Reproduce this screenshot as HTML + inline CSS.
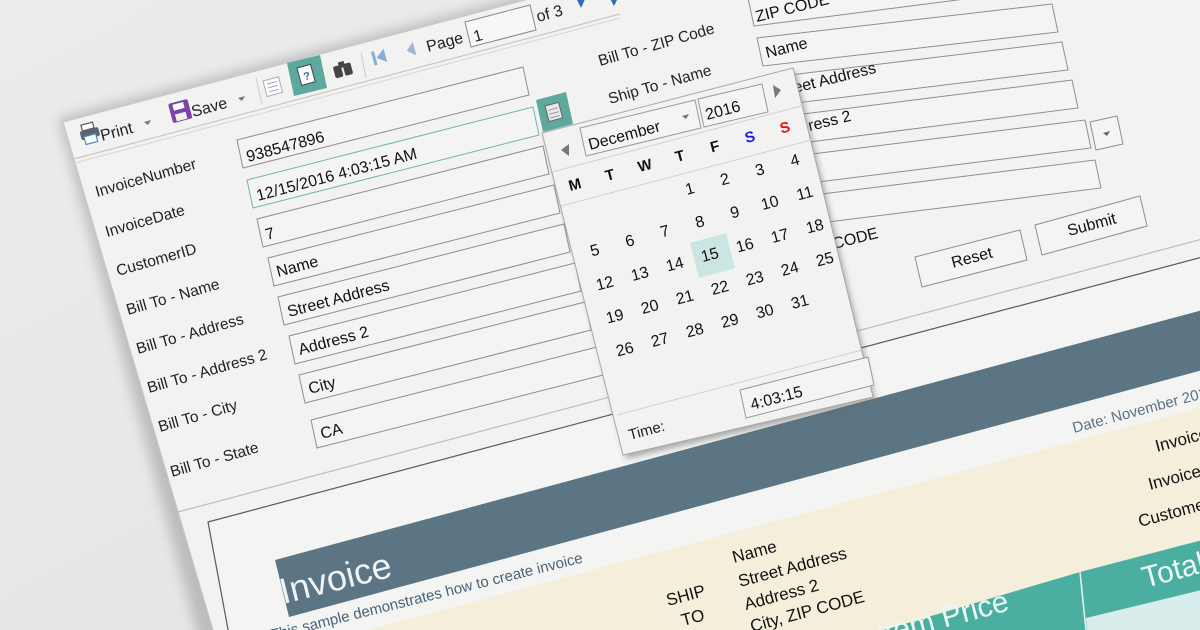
<!DOCTYPE html>
<html><head><meta charset="utf-8"><style>
html,body{margin:0;padding:0;width:1200px;height:630px;overflow:hidden;background:#e7e7e7}
svg{display:block;overflow:hidden}
text{font-family:"Liberation Sans",Arial,sans-serif}
</style></head><body>
<svg width="1200" height="630" viewBox="0 0 1200 630" xmlns="http://www.w3.org/2000/svg">
<defs>
<linearGradient id="bg" x1="0" y1="0" x2="1" y2="1"><stop offset="0" stop-color="#ececec"/><stop offset="1" stop-color="#e2e2e2"/></linearGradient>
<filter id="sh" x="-20%" y="-20%" width="140%" height="140%"><feGaussianBlur stdDeviation="6"/></filter>
<filter id="sh2" x="-20%" y="-20%" width="140%" height="140%"><feGaussianBlur stdDeviation="3"/></filter>
</defs>
<rect width="1200" height="630" fill="url(#bg)"/>
<polygon points="58,118 620,-30 1250,-30 1250,700 215,700" fill="#9a9a9a" opacity="0.55" filter="url(#sh)"/>
<polygon points="63,122 620,-25 1210,-25 1210,640 216,640" fill="#f2f2f0" stroke="#c9c9c9"/>
<line x1="70" y1="160" x2="620" y2="14" stroke="#c8c8c8" stroke-width="1.2"/>
<line x1="71" y1="164" x2="620" y2="18" stroke="#d6d6d6" stroke-width="1"/>

<g transform="translate(78,126) rotate(-15)">
 <rect x="3" y="0" width="12" height="6" fill="#fff" stroke="#556" stroke-width="1.2"/>
 <rect x="0" y="6" width="19" height="9" rx="2" fill="#5d6470"/>
 <rect x="3" y="12" width="12" height="8" fill="#fff" stroke="#4a8fc7" stroke-width="1.2"/>
</g>
<text transform="translate(102,141) rotate(-15)" font-size="16" fill="#222">Print</text>
<polygon points="144,122 151,120 148,125" fill="#777"/>
<g transform="translate(168,104) rotate(-15)">
 <rect x="0" y="0" width="20" height="20" rx="2" fill="#7b45a8"/>
 <rect x="4" y="2" width="11" height="6" fill="#fff"/>
 <rect x="4" y="12" width="11" height="7" fill="#f2f2f0"/>
</g>
<text transform="translate(193,117) rotate(-15)" font-size="16" fill="#222">Save</text>
<polygon points="238,98 245,96 242,101" fill="#777"/>
<line x1="256" y1="78" x2="262" y2="104" stroke="#ccc"/>
<g transform="translate(263,81) rotate(-15)">
 <rect x="0" y="0" width="16" height="16" fill="#fff" stroke="#aab" stroke-width="1"/>
 <line x1="3" y1="4" x2="13" y2="4" stroke="#9ab"/><line x1="3" y1="8" x2="13" y2="8" stroke="#9ab"/><line x1="3" y1="12" x2="13" y2="12" stroke="#9ab"/>
</g>
<polygon points="287,63 320,55 327,88 294,96" fill="#5ea99d"/>
<g transform="translate(297,68) rotate(-15)">
 <rect x="0" y="0" width="14" height="18" fill="#fff" stroke="#445" stroke-width="1"/>
 <text x="4" y="14" font-size="11" font-weight="bold" fill="#2a6ab0">?</text>
</g>
<g transform="translate(332,64) rotate(-15)">
 <rect x="0" y="3" width="8" height="12" rx="2" fill="#444"/><rect x="10" y="3" width="8" height="12" rx="2" fill="#444"/><rect x="6" y="0" width="6" height="6" fill="#444"/>
</g>
<line x1="361" y1="52" x2="366" y2="78" stroke="#ccc"/>
<g transform="translate(371,52) rotate(-15)"><rect x="0" y="0" width="3" height="14" fill="#86aed6"/><polygon points="4,7 13,0 13,14" fill="#86aed6"/></g>
<g transform="translate(405,44) rotate(-15)"><polygon points="0,7 8,0 8,14" fill="#9cb8d6"/></g>
<text transform="translate(428,52) rotate(-15)" font-size="16" fill="#222">Page</text>
<polygon points="465,22 530,5 536,30 471,47" fill="#f7f7f5" stroke="#888"/>
<text transform="translate(475,42) rotate(-15)" font-size="16" fill="#222">1</text>
<text transform="translate(538,22) rotate(-15)" font-size="16" fill="#222">of 3</text>
<polygon points="577,0 586,-3 581,8" fill="#2f6db4"/>
<polygon points="609,-3 620,-6 614,6" fill="#2f6db4"/>

<line x1="178" y1="512" x2="1210" y2="237" stroke="#bdbdbd" stroke-width="1.2"/>

<g font-size="15.5" fill="#222">
<text transform="translate(97,197) rotate(-16)">InvoiceNumber</text>
<text transform="translate(107,237) rotate(-16)">InvoiceDate</text>
<text transform="translate(118,276) rotate(-16)">CustomerID</text>
<text transform="translate(128,315) rotate(-16)">Bill To - Name</text>
<text transform="translate(138,354) rotate(-16)">Bill To - Address</text>
<text transform="translate(149,393) rotate(-16)">Bill To - Address 2</text>
<text transform="translate(160,432) rotate(-16)">Bill To - City</text>
<text transform="translate(172,477) rotate(-16)">Bill To - State</text>
</g>
<g fill="#f4f4f2" stroke="#8e8e8e" stroke-width="1">
<polygon points="237,140 523,67 529,95 243,168"/>
<polygon points="247,180 533,107 539,135 253,208" stroke="#6fb5aa"/>
<polygon points="257,219 543,146 549,174 263,247"/>
<polygon points="268,258 554,185 560,213 274,286"/>
<polygon points="278,297 564,224 570,252 284,325"/>
<polygon points="289,336 575,263 581,291 295,364"/>
<polygon points="299,375 585,302 591,330 305,403"/>
<polygon points="311,420 597,347 603,375 317,448"/>
</g>
<g font-size="16" fill="#111">
<text transform="translate(248,162) rotate(-15)">938547896</text>
<text transform="translate(258,201) rotate(-15)">12/15/2016 4:03:15 AM</text>
<text transform="translate(267,240) rotate(-15)">7</text>
<text transform="translate(278,277) rotate(-15)">Name</text>
<text transform="translate(289,317) rotate(-15)">Street Address</text>
<text transform="translate(300,355) rotate(-15)">Address 2</text>
<text transform="translate(310,394) rotate(-15)">City</text>
<text transform="translate(322,439) rotate(-15)">CA</text>
</g>
<polygon points="536,100 566,92 573,124 543,132" fill="#5ea99d"/>
<g transform="translate(545,106) rotate(-15)"><rect x="0" y="0" width="14" height="16" fill="#e8e8e8" stroke="#666"/><line x1="2" y1="5" x2="12" y2="5" stroke="#999"/><line x1="2" y1="9" x2="12" y2="9" stroke="#999"/><line x1="2" y1="13" x2="12" y2="13" stroke="#999"/></g>

<g font-size="15.5" fill="#222">
<text transform="translate(600,66) rotate(-16)">Bill To - ZIP Code</text>
<text transform="translate(610,104) rotate(-16)">Ship To - Name</text>
</g>
<g fill="#f4f4f2" stroke="#8e8e8e" stroke-width="1">
<polygon points="748,-2 1045,-40 1051,-12 754,26"/>
<polygon points="757,38 1052,4 1058,32 763,66"/>
<polygon points="765,78 1062,42 1068,70 771,106"/>
<polygon points="772,118 1072,80 1078,108 778,146"/>
<polygon points="780,158 1085,120 1091,148 786,186"/>
<polygon points="1090,122 1117,116 1123,144 1096,150"/>
<polygon points="790,198 1095,160 1101,188 796,226"/>
<polygon points="915,257 1020,230 1027,260 922,287"/>
<polygon points="1035,225 1140,196 1147,226 1042,255"/>
</g>
<polygon points="1103,133 1110,131 1107,136" fill="#666"/>
<g font-size="16" fill="#111">
<text transform="translate(757,22) rotate(-14)">ZIP CODE</text>
<text transform="translate(767,58) rotate(-14)">Name</text>
<text transform="translate(775,98) rotate(-14)">Street Address</text>
<text transform="translate(782,138) rotate(-14)">Address 2</text>
<text transform="translate(790,178) rotate(-14)">City</text>
<text transform="translate(806,256) rotate(-14)">ZIP CODE</text>
<text transform="translate(953,268) rotate(-15)">Reset</text>
<text transform="translate(1069,236) rotate(-15)">Submit</text>
</g>

<polygon points="208,522 1210,255 1210,640 230,640" fill="#f4f5f3" stroke="#5a5a5a" stroke-width="1.2"/>
<polygon points="275,560 1210,308 1210,368 289,617" fill="#5b7584"/>
<polygon points="1210,405 1210,640 330,640" fill="#f4eedb"/>
<polygon points="850,640 1080,572 1210,538 1210,640" fill="#4aafa0"/>
<line x1="1080" y1="572" x2="1086" y2="630" stroke="#e8f3f1" stroke-width="1.5"/>
<polygon points="1086,618 1210,588 1210,640 1088,640" fill="#d9eeec"/>
<text transform="translate(283,604) rotate(-14)" font-size="36" fill="#eef3f4">Invoice</text>
<text transform="translate(272,640) rotate(-14)" font-size="15" fill="#4a6277">This sample demonstrates how to create invoice</text>
<text transform="translate(1074,433) rotate(-15)" font-size="15" fill="#5a7186">Date: November 2016</text>
<g font-size="17" fill="#111">
<text transform="translate(1157,452) rotate(-15)">Invoice #</text>
<text transform="translate(1150,490) rotate(-15)">Invoice</text>
<text transform="translate(1140,527) rotate(-15)">Customer</text>
<text transform="translate(668,606) rotate(-15)">SHIP</text>
<text transform="translate(683,626) rotate(-15)">TO</text>
<text transform="translate(734,563) rotate(-15)">Name</text>
<text transform="translate(740,587) rotate(-15)">Street Address</text>
<text transform="translate(746,610) rotate(-15)">Address 2</text>
<text transform="translate(752,632) rotate(-15)">City, ZIP CODE</text>
</g>
<text transform="translate(1145,588) rotate(-15)" font-size="30" fill="#eef7f5">Total</text>
<text transform="translate(880,645) rotate(-15)" font-size="30" fill="#eef7f5">Item Price</text>

<polygon points="542,133 793,68 873,397 623,455" fill="#666" opacity="0.5" filter="url(#sh2)" transform="translate(3,4)"/>
<polygon points="542,133 793,68 873,397 623,455" fill="#f2f3f1" stroke="#a8a8a8"/>
<line x1="552" y1="172" x2="805" y2="105" stroke="#cfcfcf"/>
<line x1="561" y1="206" x2="815" y2="139" stroke="#cfcfcf"/>
<line x1="617" y1="415" x2="862" y2="350" stroke="#cfcfcf"/>
<polygon points="561,150 569,144 569,156" fill="#777"/>
<polygon points="781,90 773,85 775,98" fill="#777"/>
<polygon points="580,128 695,100 701,128 586,156" fill="#f4f4f2" stroke="#999"/>
<polygon points="698,99 762,84 768,112 704,127" fill="#f4f4f2" stroke="#999"/>
<text transform="translate(590,150) rotate(-15)" font-size="16" fill="#111">December</text>
<polygon points="682,116 689,114 686,119" fill="#777"/>
<text transform="translate(707,120) rotate(-15)" font-size="16" fill="#111">2016</text>
<g font-size="15" font-weight="bold" text-anchor="middle" dominant-baseline="central">
<text transform="translate(575,185) rotate(-15)" fill="#111">M</text>
<text transform="translate(610,175.5) rotate(-15)" fill="#111">T</text>
<text transform="translate(645,166) rotate(-15)" fill="#111">W</text>
<text transform="translate(680,156.5) rotate(-15)" fill="#111">T</text>
<text transform="translate(715,147) rotate(-15)" fill="#111">F</text>
<text transform="translate(750,137.5) rotate(-15)" fill="#1a1ae0">S</text>
<text transform="translate(785,128) rotate(-15)" fill="#e01515">S</text>
</g>
<polygon points="690,243 726,233 735,268 699,278" fill="#cbe6e2"/>
<g font-size="16" fill="#111" text-anchor="middle" dominant-baseline="central">
<text transform="translate(690,189.5) rotate(-15)">1</text>
<text transform="translate(725,180) rotate(-15)">2</text>
<text transform="translate(760,170.5) rotate(-15)">3</text>
<text transform="translate(795,161) rotate(-15)">4</text>
<text transform="translate(595,251) rotate(-15)">5</text>
<text transform="translate(630,241.5) rotate(-15)">6</text>
<text transform="translate(665,232) rotate(-15)">7</text>
<text transform="translate(700,222.5) rotate(-15)">8</text>
<text transform="translate(735,213) rotate(-15)">9</text>
<text transform="translate(770,203.5) rotate(-15)">10</text>
<text transform="translate(805,194) rotate(-15)">11</text>
<text transform="translate(605,284) rotate(-15)">12</text>
<text transform="translate(640,274.5) rotate(-15)">13</text>
<text transform="translate(675,265) rotate(-15)">14</text>
<text transform="translate(710,255.5) rotate(-15)">15</text>
<text transform="translate(745,246) rotate(-15)">16</text>
<text transform="translate(780,236.5) rotate(-15)">17</text>
<text transform="translate(815,227) rotate(-15)">18</text>
<text transform="translate(615,317) rotate(-15)">19</text>
<text transform="translate(650,307.5) rotate(-15)">20</text>
<text transform="translate(685,298) rotate(-15)">21</text>
<text transform="translate(720,288.5) rotate(-15)">22</text>
<text transform="translate(755,279) rotate(-15)">23</text>
<text transform="translate(790,269.5) rotate(-15)">24</text>
<text transform="translate(825,260) rotate(-15)">25</text>
<text transform="translate(625,350) rotate(-15)">26</text>
<text transform="translate(660,340.5) rotate(-15)">27</text>
<text transform="translate(695,331) rotate(-15)">28</text>
<text transform="translate(730,321.5) rotate(-15)">29</text>
<text transform="translate(765,312) rotate(-15)">30</text>
<text transform="translate(800,302.5) rotate(-15)">31</text>
</g>
<polygon points="740,390 868,357 874,385 746,418" fill="#f4f4f2" stroke="#999"/>
<text transform="translate(752,410) rotate(-15)" font-size="16" fill="#111">4:03:15</text>
<text transform="translate(630,440) rotate(-15)" font-size="15" fill="#222">Time:</text>
</svg>
</body></html>
